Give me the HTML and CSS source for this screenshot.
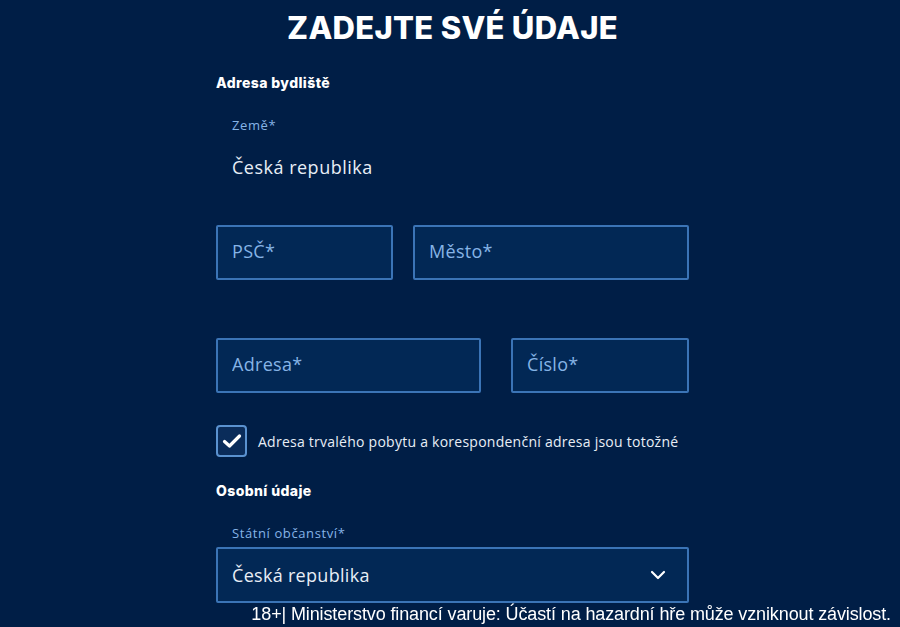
FILE: index.html
```html
<!DOCTYPE html>
<html lang="cs">
<head>
    <meta charset="UTF-8">
    <meta name="viewport" content="width=device-width, initial-scale=1.0">
    <title>Registrace</title>
    <link rel="stylesheet" href="styles.css">
</head>
<body>
    <div class="page">
        <h1>ZADEJTE SVÉ ÚDAJE</h1>

        <form class="form">
            <h3 class="section-title">Adresa bydliště</h3>

            <div class="static-field">
                <label class="field-label">Země*</label>
                <div class="static-value">Česká republika</div>
            </div>

            <div class="row row-first">
                <input class="input psc" type="text" placeholder="PSČ*">
                <input class="input grow" type="text" placeholder="Město*">
            </div>

            <div class="row row-second">
                <input class="input street" type="text" placeholder="Adresa*">
                <input class="input grow" type="text" placeholder="Číslo*">
            </div>

            <label class="check-row">
                <span class="checkbox">
                    <svg width="20" height="16" viewBox="0 0 20 16"><polyline points="2.5,8.5 7.5,13 17.5,3" fill="none" stroke="#fff" stroke-width="3.2" stroke-linecap="round" stroke-linejoin="round"/></svg>
                </span>
                <span class="check-text">Adresa trvalého pobytu a korespondenční adresa jsou totožné</span>
            </label>

            <h3 class="section-title personal">Osobní údaje</h3>

            <label class="field-label citizenship">Státní občanství*</label>
            <div class="select">
                <span>Česká republika</span>
                <svg width="16" height="10" viewBox="0 0 16 10"><polyline points="2,2 8,8 14,2" fill="none" stroke="#fff" stroke-width="2.2" stroke-linecap="round" stroke-linejoin="round"/></svg>
            </div>
        </form>
    </div>

    <div class="warning">18+| Ministerstvo financí varuje: Účastí na hazardní hře může vzniknout závislost.</div>
</body>
</html>
```

FILE: styles.css
```css
html, body {
    height: 100%;
}
body {
    margin: 0;
    background-color: #001e46;
    color: #fff;
    font-family: "Open Sans", "Noto Sans", sans-serif;
    overflow: hidden;
}
.page {
    padding-left: 5px;
}
h1 {
    margin: 0;
    padding-top: 8px;
    line-height: 40px;
    font-family: Inter, sans-serif;
    font-size: 31px;
    font-weight: 800;
    letter-spacing: 0.3px;
    text-align: center;
}
.form {
    width: 473px;
    margin: 0 auto;
}
.section-title {
    margin: 27px 0 0;
    font-family: Inter, sans-serif;
    font-size: 14px;
    font-weight: 800;
    line-height: 16px;
    letter-spacing: 0.4px;
}
.field-label {
    display: block;
    padding-left: 16px;
    font-size: 13px;
    line-height: 16px;
    letter-spacing: 0.6px;
    color: #86b4e6;
}
.static-field {
    margin-top: 26px;
}
.static-value {
    margin-top: 22px;
    padding-left: 16px;
    font-size: 18px;
    line-height: 24px;
    letter-spacing: 0.5px;
    color: #e8eef6;
}
.row {
    display: flex;
    gap: 20px;
}
.row-first {
    margin-top: 46px;
}
.row-second {
    margin-top: 58px;
    gap: 30px;
}
.input {
    box-sizing: border-box;
    height: 55px;
    padding: 0 14px 4px;
    border: 2px solid #3b74b6;
    border-radius: 2px;
    background-color: #022855;
    color: #fff;
    font-family: "Open Sans", sans-serif;
    font-size: 18px;
    letter-spacing: 0.3px;
    outline: none;
}
.input::placeholder {
    color: #86b4e6;
}
.psc {
    width: 177px;
}
.street {
    width: 265px;
}
.grow {
    flex: 1;
    min-width: 0;
}
.check-row {
    display: flex;
    align-items: center;
    gap: 11px;
    margin-top: 32px;
}
.checkbox {
    box-sizing: border-box;
    width: 31px;
    height: 32px;
    display: flex;
    align-items: center;
    justify-content: center;
    border: 2px solid #5a92d0;
    border-radius: 4px;
    background-color: #0a2c5a;
}
.check-text {
    font-size: 14px;
    font-weight: 500;
    letter-spacing: 0.25px;
    color: #e8eef6;
}
.personal {
    margin-top: 26px;
}
.citizenship {
    margin-top: 26px;
}
.select {
    box-sizing: border-box;
    height: 56px;
    margin-top: 6px;
    padding: 0 21px 0 14px;
    display: flex;
    align-items: center;
    justify-content: space-between;
    border: 2px solid #3b74b6;
    border-radius: 2px;
    background-color: #022855;
    font-size: 18px;
    letter-spacing: 0.3px;
    color: #e8eef6;
}
.warning {
    position: fixed;
    right: 9px;
    bottom: 3px;
    font-family: "Liberation Sans", Arial, sans-serif;
    font-size: 18px;
    line-height: 20px;
    letter-spacing: -0.12px;
    color: #fff;
}
```
